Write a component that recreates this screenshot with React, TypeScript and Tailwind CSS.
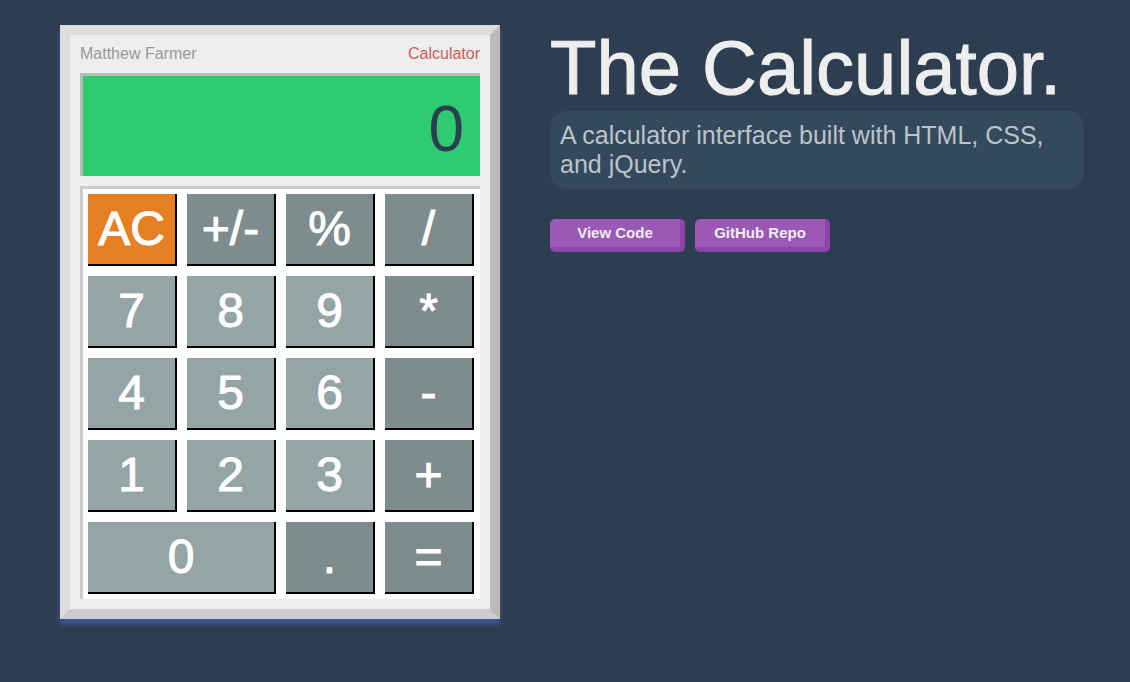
import { useState } from "react";

type Key = { label: string; name?: string; kind: "clear" | "digit" | "op"; wide?: boolean };

const keys: Key[] = [
  { label: "AC", name: "All clear", kind: "clear" },
  { label: "+/-", name: "Toggle sign", kind: "op" },
  { label: "%", kind: "op" },
  { label: "/", kind: "op" },
  { label: "7", kind: "digit" },
  { label: "8", kind: "digit" },
  { label: "9", kind: "digit" },
  { label: "*", kind: "op" },
  { label: "4", kind: "digit" },
  { label: "5", kind: "digit" },
  { label: "6", kind: "digit" },
  { label: "-", kind: "op" },
  { label: "1", kind: "digit" },
  { label: "2", kind: "digit" },
  { label: "3", kind: "digit" },
  { label: "+", kind: "op" },
  { label: "0", kind: "digit", wide: true },
  { label: ".", kind: "op" },
  { label: "=", kind: "op" },
];

const keyColors = {
  clear: "bg-[#e67e22]",
  digit: "bg-[#95a5a6]",
  op: "bg-[#7f8c8d]",
};

const linkClass =
  "flex h-[33px] w-[135px] items-center justify-center rounded-[5px] border-r-[5px] border-b-[5px] border-[#8e44ad] bg-[#9b59b6] text-[15px] leading-[20px] font-bold text-[#eee]";

function compute(a: number, b: number, op: string) {
  if (op === "+") return a + b;
  if (op === "-") return a - b;
  if (op === "*") return a * b;
  return a / b;
}

export default function App() {
  const [display, setDisplay] = useState("0");
  const [stored, setStored] = useState(0);
  const [pending, setPending] = useState("");
  const [fresh, setFresh] = useState(true);

  const press = (key: Key) => {
    const { label } = key;
    if (label === "AC") {
      setDisplay("0");
      setStored(0);
      setPending("");
      setFresh(true);
    } else if (label === "+/-") {
      setDisplay(String(-Number(display)));
    } else if (label === "%") {
      setDisplay(String(Number(display) / 100));
    } else if (key.kind === "digit" || label === ".") {
      if (label === "." && !fresh && display.includes(".")) return;
      const start = label === "." ? "0." : label;
      setDisplay(fresh ? start : display + label);
      setFresh(false);
    } else {
      const value = pending ? compute(stored, Number(display), pending) : Number(display);
      setDisplay(String(value));
      setStored(value);
      setPending(label === "=" ? "" : label);
      setFresh(true);
    }
  };

  return (
    <div className="flex min-h-screen items-start gap-[50px] bg-[#2c3e50] pt-[25px] pr-[46px] pb-[50px] pl-[60px] font-['Liberation_Sans',Arial,sans-serif]">
      <section
        aria-label="Calculator"
        className="w-[440px] shrink-0 border-[10px] border-t-[#ddd] border-r-[#bbb] border-b-[#ccc] border-l-[#ddd] bg-[#eee] p-[10px] shadow-[0_5px_5px_#3b5998]"
      >
        <header className="mb-[10px] flex justify-between text-[16px] leading-[18px]">
          <span className="text-[#999]">Matthew Farmer</span>
          <span className="text-[#cd5c5c]">Calculator</span>
        </header>
        <output className="mb-[10px] flex h-[103px] items-center justify-end overflow-hidden border-t-[3px] border-l-[3px] border-[#bbb] bg-[#2ecc71] pt-[5px] pr-[16px] text-[64px] leading-[72px] text-[#2c3e50]">
          {display}
        </output>
        <div className="grid grid-cols-4 gap-[10px] border-t-[3px] border-l-[3px] border-[#ccc] bg-white pt-[5px] pr-[6px] pb-[5px] pl-[5px]">
          {keys.map((key) => (
            <button
              key={key.label}
              type="button"
              aria-label={key.name}
              onClick={() => press(key)}
              className={`flex h-[72px] cursor-pointer items-center justify-center border-r-2 border-b-2 border-black text-[48px] leading-[56px] text-white [-webkit-text-stroke:1px_white] ${keyColors[key.kind]} ${key.wide ? "col-span-2" : ""}`}
            >
              {key.label}
            </button>
          ))}
        </div>
      </section>

      <main className="min-w-0 flex-1">
        <h1 className="text-[76px] leading-[86px] text-[#eee] [-webkit-text-stroke:1px_#eee]">
          The Calculator.
        </h1>
        <p className="mb-[30px] rounded-[16px] bg-[#34495e] p-[10px] text-[25px] leading-[29px] text-[#bdc3c7]">
          A calculator interface built with HTML, CSS, and jQuery.
        </p>
        <nav className="flex gap-[10px]">
          <a href="#code" className={linkClass}>
            View Code
          </a>
          <a href="#repo" className={linkClass}>
            GitHub Repo
          </a>
        </nav>
      </main>
    </div>
  );
}
